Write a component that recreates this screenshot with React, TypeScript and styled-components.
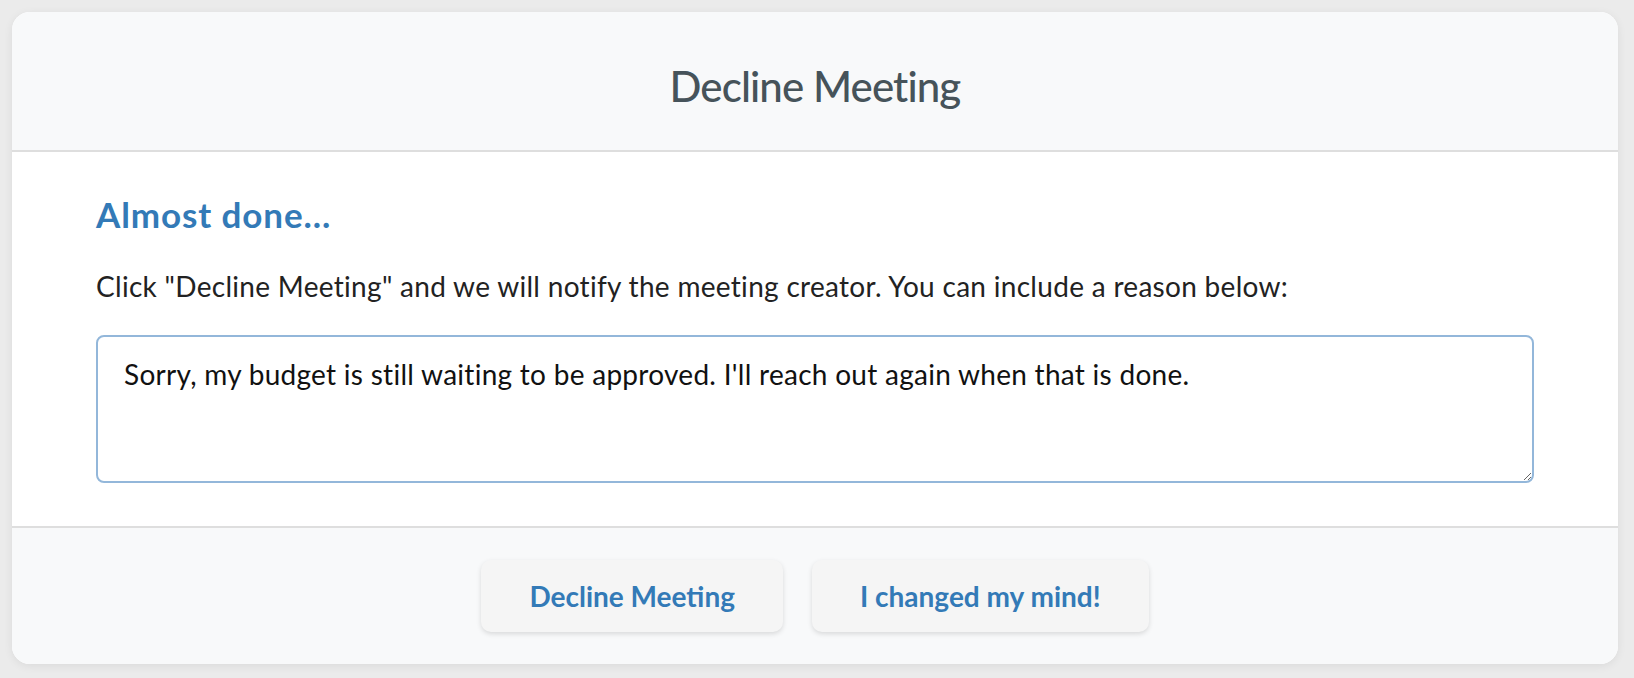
import React from "react";
import styled, { createGlobalStyle } from "styled-components";

const GlobalStyle = createGlobalStyle`
  html, body {
    margin: 0;
    padding: 0;
    background: #ebebeb;
  }
  body {
    font-family: "Lato", "Noto Sans", sans-serif;
  }
  * { box-sizing: border-box; }
`;

const Page = styled.div`
  padding: 12px 16px 14px 12px;
`;

const Card = styled.div`
  background: #ffffff;
  border-radius: 18px;
  overflow: hidden;
  box-shadow: 0 2px 10px rgba(0, 0, 0, 0.07);
  display: flex;
  flex-direction: column;
`;

const Header = styled.div`
  background: #f8f9fa;
  border-bottom: 2px solid #dedede;
  height: 140px;
  padding-top: 49px;
  text-align: center;
`;

const Title = styled.h1`
  margin: 0;
  font-size: 42px;
  line-height: 50px;
  font-weight: 500;
  letter-spacing: -0.9px;
  font-variant-ligatures: none;
  color: #46535a;
`;

const Body = styled.div`
  padding: 41px 84px 43px 84px;
  border-bottom: 2px solid #dedede;
`;

const Heading = styled.h2`
  margin: 0;
  font-size: 35px;
  line-height: 42px;
  font-weight: 700;
  letter-spacing: 0.9px;
  color: #337ab7;
`;

const Text = styled.p`
  margin: 34px 0 32px 0;
  font-size: 28px;
  line-height: 34px;
  letter-spacing: 0.3px;
  font-variant-ligatures: none;
  color: #222222;
`;

const Reason = styled.textarea`
  display: block;
  width: 100%;
  height: 148px;
  border: 2px solid #93b7da;
  border-radius: 8px;
  padding: 20px 26px;
  font-family: "Lato", "Noto Sans", sans-serif;
  font-size: 28px;
  line-height: 34px;
  letter-spacing: 0.28px;
  font-variant-ligatures: none;
  color: #111111;
  background: #ffffff;
  outline: none;
  resize: vertical;
`;

const Footer = styled.div`
  background: #f8f9fa;
  height: 136px;
  display: flex;
  justify-content: center;
  align-items: center;
  gap: 29px;
`;

const Button = styled.button`
  height: 72px;
  padding: 0 48px;
  border: none;
  border-radius: 10px;
  background: #f5f5f5;
  box-shadow: 0 2px 5px rgba(0, 0, 0, 0.13);
  font-family: "Lato", "Noto Sans", sans-serif;
  font-size: 28px;
  font-weight: 700;
  color: #337ab7;
  cursor: pointer;
`;

export default function App() {
  return (
    <>
      <GlobalStyle />
      <Page>
        <Card>
          <Header>
            <Title>Decline Meeting</Title>
          </Header>
          <Body>
            <Heading>Almost done...</Heading>
            <Text>
              Click "Decline Meeting" and we will notify the meeting creator. You can include a reason below:
            </Text>
            <Reason defaultValue="Sorry, my budget is still waiting to be approved. I'll reach out again when that is done." />
          </Body>
          <Footer>
            <Button>Decline Meeting</Button>
            <Button>I changed my mind!</Button>
          </Footer>
        </Card>
      </Page>
    </>
  );
}
